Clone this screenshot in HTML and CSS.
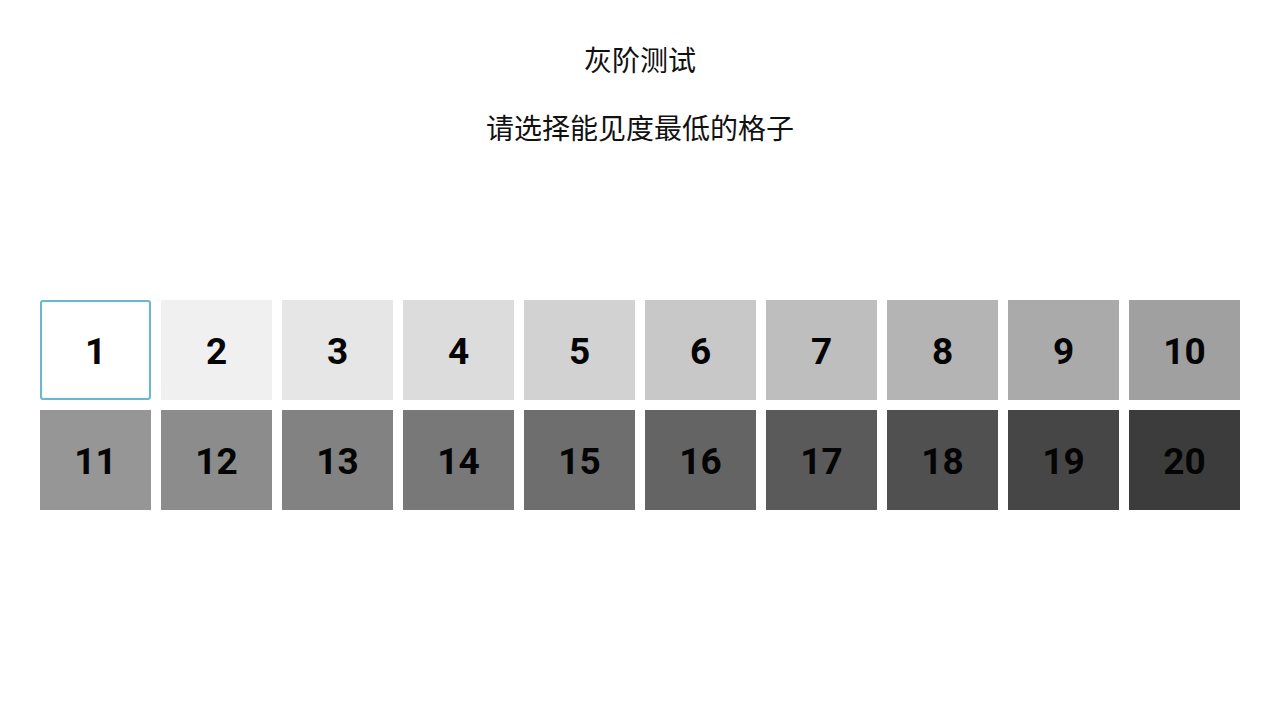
FILE: index.html
```html
<!DOCTYPE html>
<html lang="zh-CN">
<head>
<meta charset="utf-8">
<title>灰阶测试</title>
<link rel="stylesheet" href="styles.css">
</head>
<body>
<main class="page">
  <header class="intro">
    <h1 class="title">灰阶测试</h1>
    <p class="hint">请选择能见度最低的格子</p>
  </header>
  <section class="grid">
    <button class="cell selected" style="background:#ffffff">1</button>
    <button class="cell" style="background:#f0f0f0">2</button>
    <button class="cell" style="background:#e6e6e6">3</button>
    <button class="cell" style="background:#dcdcdc">4</button>
    <button class="cell" style="background:#d2d2d2">5</button>
    <button class="cell" style="background:#c8c8c8">6</button>
    <button class="cell" style="background:#bebebe">7</button>
    <button class="cell" style="background:#b4b4b4">8</button>
    <button class="cell" style="background:#aaaaaa">9</button>
    <button class="cell" style="background:#a0a0a0">10</button>
    <button class="cell" style="background:#969696">11</button>
    <button class="cell" style="background:#8c8c8c">12</button>
    <button class="cell" style="background:#828282">13</button>
    <button class="cell" style="background:#787878">14</button>
    <button class="cell" style="background:#6e6e6e">15</button>
    <button class="cell" style="background:#646464">16</button>
    <button class="cell" style="background:#5a5a5a">17</button>
    <button class="cell" style="background:#505050">18</button>
    <button class="cell" style="background:#464646">19</button>
    <button class="cell" style="background:#3c3c3c">20</button>
  </section>
</main>
</body>
</html>
```
FILE: styles.css
```css
html, body {
  margin: 0;
  padding: 0;
  background: #ffffff;
}

.page {
  width: 1280px;
  height: 720px;
  box-sizing: border-box;
  padding: 39px 40px 0;
  display: flex;
  flex-direction: column;
  font-family: "Noto Sans CJK SC", "Noto Sans", sans-serif;
}

.intro {
  display: flex;
  flex-direction: column;
  align-items: center;
  gap: 28px;
  color: #111111;
}

.title,
.hint {
  margin: 0;
  font-size: 28px;
  font-weight: 400;
  line-height: 40px;
}

.grid {
  margin-top: 153px;
  display: grid;
  grid-template-columns: repeat(10, 111px);
  grid-auto-rows: 100px;
  gap: 10px;
}

.cell {
  border: none;
  padding: 3px 0 0;
  margin: 0;
  display: flex;
  align-items: center;
  justify-content: center;
  font-family: Roboto, "Liberation Sans", sans-serif;
  font-weight: 700;
  font-size: 37px;
  color: #050505;
  cursor: pointer;
}

.cell.selected {
  border: 2px solid #6fb5cc;
  border-radius: 3px;
  box-shadow: inset 0 0 3px #d6f1f7;
}
```
